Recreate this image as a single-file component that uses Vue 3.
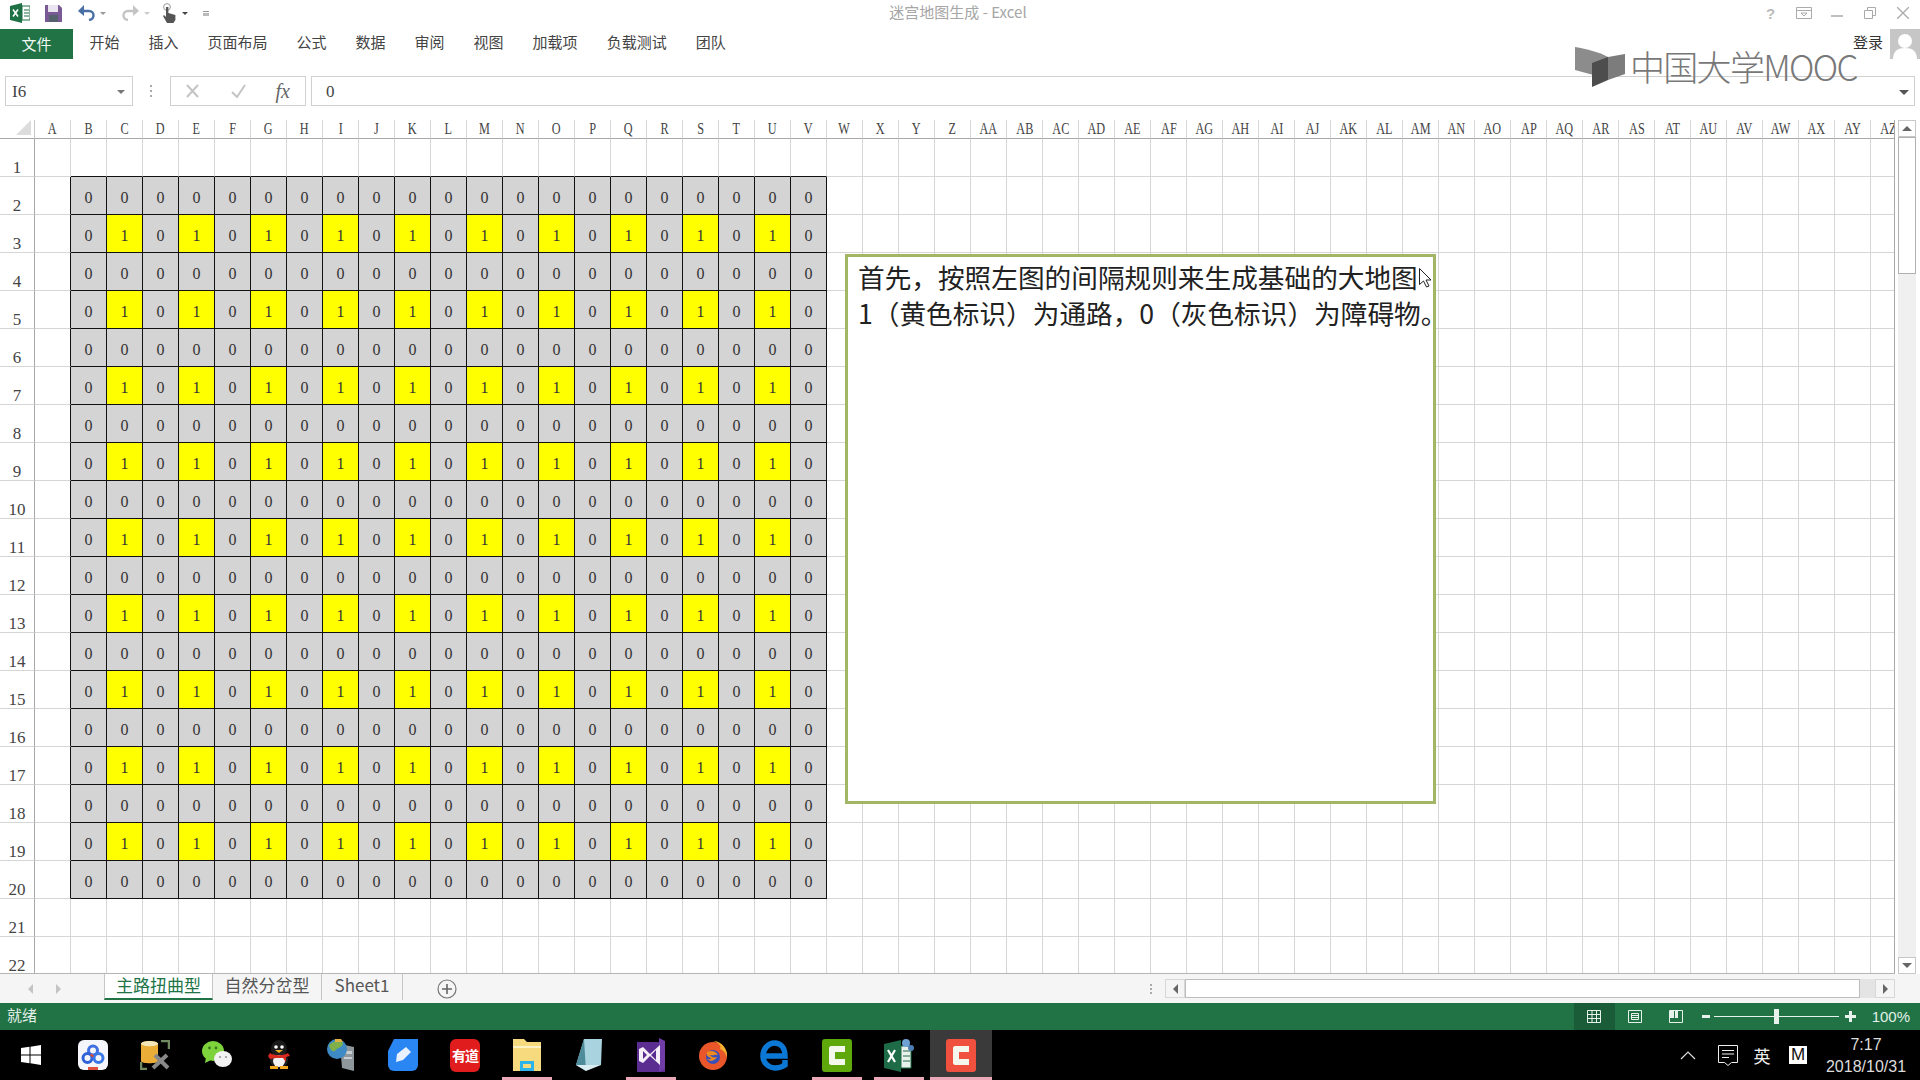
<template>
  <div class="window">
    <header class="titlebar">
      <div class="quick">
        <svg class="qa xl" width="20" height="20" viewBox="0 0 20 20"><path d="M0 3 12 0v20L0 17z" fill="#1e7145"/><path d="M12 3h8v14h-8z" fill="#fff" stroke="#1e7145"/><path d="M14 7h5M14 10h5M14 13h5" stroke="#1e7145"/><path d="m3 6.500 5 7M8 6.500l-5 7" stroke="#fff" stroke-width="1.600"/></svg>
        <svg class="qa save" width="17" height="17" viewBox="0 0 17 17"><path d="M0 0h14l3 3v14H0z" fill="#7a5a94"/><path d="M3 0h10v7H3z" fill="#e9e4ef"/><path d="M4 10h9v7H4z" fill="#55616c"/></svg>
        <svg class="qa undo" width="17" height="16" viewBox="0 0 17 16"><path d="M3 6h8c6 0 6 8 0 9" fill="none" stroke="#4a6fa5" stroke-width="2.400"/><path d="M6 0 0 6l6 5z" fill="#4a6fa5"/></svg>
        <span class="caret small"></span>
        <svg class="qa redo" width="17" height="16" viewBox="0 0 17 16"><path d="M14 6H6c-6 0-6 8 0 9" fill="none" stroke="#c4c4c4" stroke-width="2.400"/><path d="m11 0 6 6-6 5z" fill="#c4c4c4"/></svg>
        <span class="caret small pale"></span>
        <svg class="qa touch" width="14" height="20" viewBox="0 0 14 20"><circle cx="5" cy="4" r="3.400" fill="none" stroke="#999"/><path d="M4 4h2.400v6l7 2v5l-2 3H5L1 13l1-1 2 2z" fill="#555"/></svg>
        <span class="caret small dark"></span>
        <span class="customize"></span>
      </div>
      <div class="doc-title">迷宫地图生成 - Excel</div>
      <div class="win-controls">
        <span class="help">?</span>
        <svg width="16" height="12" viewBox="0 0 16 12"><path d="M.5.5h15v11H.5zM.5 3.500h15M5 6h6l-3 3z" fill="none" stroke="#aaa"/></svg>
        <svg width="12" height="12" viewBox="0 0 12 12"><path d="M0 9h12" stroke="#aaa" stroke-width="1.500"/></svg>
        <svg width="12" height="12" viewBox="0 0 12 12"><path d="M.5 3.500h8v8h-8zM3.500 3V.5h8v8H9" fill="none" stroke="#aaa"/></svg>
        <svg width="12" height="12" viewBox="0 0 12 12"><path d="m0 0 12 12M12 0 0 12" stroke="#aaa" stroke-width="1.300"/></svg>
      </div>
    </header>

    <nav class="ribbon">
      <span class="file-tab">文件</span>
      <span v-for="tab in ribbonTabs" :key="tab" class="ribbon-tab">{{ tab }}</span>
      <span class="login">登录</span>
      <svg class="avatar" width="30" height="30" viewBox="0 0 30 30"><path d="M0 0h30v30H0z" fill="#c6c6c6"/><circle cx="15" cy="12" r="7" fill="#fff"/><path d="M3 30c0-8 5-11 12-11s12 3 12 11z" fill="#fff"/></svg>
    </nav>

    <div class="formula-row">
      <div class="name-box"><span>I6</span><i class="caret"></i></div>
      <div class="dots"></div>
      <div class="fx-box">
        <svg width="16" height="16" viewBox="0 0 16 16"><path d="m2 2 11 12M13 2 2 14" stroke="#c4c4c4" stroke-width="2"/></svg>
        <svg width="17" height="16" viewBox="0 0 17 16"><path d="m2 9 5 5 8-12" fill="none" stroke="#c4c4c4" stroke-width="2"/></svg>
        <span class="fx">fx</span>
      </div>
      <div class="formula-input"><span>0</span><i class="caret wide"></i></div>
    </div>

    <main class="sheet-row">
      <section class="sheet">
        <div class="grid">
          <div class="corner"><b></b></div>
          <div v-for="col in columns" :key="col" class="col-head"><span>{{ col }}</span></div>
          <template v-for="row in rows" :key="row">
            <div class="row-head">{{ row }}</div>
            <div
              v-for="(col, i) in columns"
              :key="col"
              class="cell"
              :class="cellClass(row, i + 1)"
            >{{ cellText(row, i + 1) }}</div>
          </template>
        </div>
        <div class="note">
          <p>首先&#xFF0C;按照左图的间隔规则来生成基础的大地图</p>
          <p>1&#xFF08;黄色标识&#xFF09;为通路&#xFF0C;0&#xFF08;灰色标识&#xFF09;为障碍物。</p>
          <svg class="pointer" width="12" height="20" viewBox="0 0 12 20"><path d="M.5.5v16l4-3.500 3 6 2.500-1-3-6h5z" fill="#fff" stroke="#222"/></svg>
        </div>
      </section>
      <aside class="vscroll">
        <div class="vbtn"><i class="tri up"></i></div>
        <div class="vthumb"></div>
        <div class="vtrack"></div>
        <div class="vbtn"><i class="tri down"></i></div>
      </aside>
    </main>

    <div class="tabs-row">
      <div class="tab-nav"><i class="tri left"></i><i class="tri right"></i></div>
      <span class="sheet-tab active">主路扭曲型</span>
      <span class="sheet-tab">自然分岔型</span>
      <span class="sheet-tab">Sheet1</span>
      <svg class="add" width="20" height="20" viewBox="0 0 20 20"><circle cx="10" cy="10" r="9" fill="none" stroke="#777" stroke-width="1.200"/><path d="M10 5v10M5 10h10" stroke="#666" stroke-width="1.600"/></svg>
      <div class="hscroll">
        <span class="split"></span>
        <div class="hbtn"><i class="tri left dark"></i></div>
        <div class="hthumb"></div>
        <div class="htrack"></div>
        <div class="hbtn"><i class="tri right dark"></i></div>
      </div>
    </div>

    <footer class="status">
      <span class="ready">就绪</span>
      <div class="views">
        <div class="view on"><svg width="14" height="13" viewBox="0 0 14 13"><path d="M.5.5h13v12H.5zM5 .5v12M9.500.5v12M.5 4.500h13M.5 8.500h13" fill="none" stroke="#e8f2ec"/></svg></div>
        <div class="view"><svg width="14" height="13" viewBox="0 0 14 13"><path d="M.5.5h13v12H.5zM3.500 3.500h7v6h-7zM4 5.500h6M4 7.500h6" fill="none" stroke="#e8f2ec"/></svg></div>
        <div class="view"><svg width="14" height="13" viewBox="0 0 14 13"><path d="M.5.5h13v12H.5z" fill="none" stroke="#e8f2ec"/><path d="M1 1h4v7H1zM6 1h3v7H6z" fill="#e8f2ec"/></svg></div>
      </div>
      <div class="zoom-ctl">
        <span class="minus"></span>
        <div class="slider"><b></b></div>
        <span class="plus"></span>
      </div>
      <span class="percent">100%</span>
    </footer>

    <div class="taskbar">
      <div class="task"><svg width="20" height="20" viewBox="0 0 20 20"><path d="M0 3l8.500-1.200V9.500H0zM9.500 1.700 20 0v9.500H9.500zM0 10.500h8.500v7.700L0 17zM9.500 10.500H20V20L9.500 18.300z" fill="#fff"/></svg></div>
      <div class="task"><svg width="30" height="30" viewBox="0 0 30 30"><rect width="30" height="30" rx="6" fill="#f4f6fb"/><g fill="none" stroke-width="3"><circle cx="15" cy="10.500" r="4.500" stroke="#3f6fe0"/><circle cx="9.500" cy="18" r="4.500" stroke="#2f62d8"/><circle cx="20.500" cy="18" r="4.500" stroke="#3a78e8"/></g><path d="M13 13.500l3 2-1 2-3-2z" fill="#d8503c"/><path d="M10 27h10v3H10z" fill="#e0503c"/></svg></div>
      <div class="task"><svg width="30" height="30" viewBox="0 0 30 30"><path d="M1 4c0-4 17-4 17 0v17c0 3-17 3-17 0z" fill="#e9ad38"/><path d="M1 4c0-4 17-4 17 0-2 3-15 3-17 0z" fill="#f4e6b8"/><path d="M21 1h8v8M1 22v7h6" fill="none" stroke="#6f8a60" stroke-width="2.500"/><path d="m13 28 14-13M15 15l13 13" stroke="#888" stroke-width="4"/></svg></div>
      <div class="task"><svg width="30" height="30" viewBox="0 0 30 30"><ellipse cx="11" cy="11" rx="11" ry="10" fill="#7ed23c"/><path d="m4 17-1 6 6-3z" fill="#7ed23c"/><circle cx="7.500" cy="8" r="1.400" fill="#3a7a1c"/><circle cx="14" cy="8" r="1.400" fill="#3a7a1c"/><ellipse cx="21" cy="19" rx="9" ry="8" fill="#f2f2f2"/><circle cx="18" cy="17" r="1.100" fill="#999"/><circle cx="24" cy="17" r="1.100" fill="#999"/></svg></div>
      <div class="task"><svg width="24" height="30" viewBox="0 0 24 30"><ellipse cx="12" cy="9" rx="8" ry="9" fill="#1a1a1a"/><ellipse cx="12" cy="20" rx="9" ry="8" fill="#222"/><ellipse cx="12" cy="21" rx="6" ry="6" fill="#f2f2f2"/><path d="M3 13c5 3 13 3 18 0l2 3-4 1v5l-3-4H9l-6 1-2-3z" fill="#d9281e"/><circle cx="9" cy="7" r="1.800" fill="#fff"/><circle cx="15" cy="7" r="1.800" fill="#fff"/><path d="M8 10h8l-4 3z" fill="#f0b020"/><path d="M3 26h8v3H3zM13 26h8v3h-8z" fill="#f0a820"/></svg></div>
      <div class="task"><svg width="30" height="32" viewBox="0 0 30 32"><path d="M14 5 28 8v24l-12-3z" fill="#8e979c"/><path d="M18 12h8v3h-8zM18 18h8v2h-8z" fill="#c8ced2"/><circle cx="11" cy="10" r="10" fill="#3d8ac4"/><path d="M3 6c4-4 10-5 14-2 0 5-6 4-8 8-3 1-5-2-6-6z" fill="#7fb04a"/><path d="M9 0h6l2 3H9z" fill="#e0b040"/></svg></div>
      <div class="task"><svg width="30" height="32" viewBox="0 0 30 32"><path d="M6 0h24v26a6 6 0 0 1-6 6H6a6 6 0 0 1-6-6V12z" fill="#2a86f2"/><path d="m18 8 5 5-8 8-7 2 1-8z" fill="#e8f1fd"/></svg></div>
      <div class="task"><div class="youdao">有道</div></div>
      <div class="task running"><svg width="28" height="32" viewBox="0 0 28 32"><path d="M0 0h11l3 3h14v29H0z" fill="#f7d97e"/><path d="M0 7h28v2H0z" fill="#fff2c4"/><path d="M7 22h14v10H7z" fill="#2db4ea"/><path d="M10 25h8v4h-8z" fill="#f7d97e"/></svg></div>
      <div class="task"><svg width="26" height="32" viewBox="0 0 26 32"><path d="M8 0h18l-1 26H0z" fill="#a9d3de"/><path d="M8 0 0 26l10 6z" fill="#4e8c9c"/><path d="M10 32 0 26h25z" fill="#d9ecf1"/></svg></div>
      <div class="task running"><svg width="28" height="34" viewBox="0 0 28 34"><path d="M0 4h28v30H0z" fill="#5c2d91"/><path d="M22 0v34l6-3V3z" fill="#6f3ca8"/><path fill="#f4eff9" fill-rule="evenodd" d="M2 11l4-2 7 7 10-9v20l-10-9-7 7-4-2zM6 13v8l4-4zM19 12l-5 5 5 5z"/></svg></div>
      <div class="task"><svg width="30" height="32" viewBox="0 0 30 32"><circle cx="15" cy="17" r="14" fill="#e8562a"/><path d="M15 2c9 0 15 8 14 17-1-5-4-8-7-9 2-3-2-7-7-8z" fill="#f5b02e"/><circle cx="15" cy="18" r="7" fill="#3a4fb8"/><path d="M9 13c4-2 9-1 11 3-3-1-4 1-8 0 1 2 4 3 7 2-2 4-7 5-10 2 3 1 4 0 4-1-3-1-5-3-4-6z" fill="#f28a1e"/></svg></div>
      <div class="task"><svg width="30" height="32" viewBox="0 0 30 32"><path d="M5 17h20C25 8 20 4 14.500 4 8 4 3 10 3 17c0 7 6 12 12 12 4 0 7-1 10-3v-5" fill="none" stroke="#0c78d6" stroke-width="5.500"/></svg></div>
      <div class="task running"><div class="c-app green"><i></i></div></div>
      <div class="task running"><svg width="30" height="34" viewBox="0 0 30 34"><path d="M0 6 17 2v32L0 30z" fill="#1e6b47"/><path d="M17 8h10v22H17z" fill="#e8f1ec" stroke="#1e6b47"/><path d="M19 13h7M19 18h7M19 23h7" stroke="#1e6b47"/><path d="m4 12 7 12M11 12 4 24" stroke="#fff" stroke-width="2.200"/><circle cx="22" cy="5" r="4" fill="#6fa2d4"/><circle cx="27" cy="10" r="3" fill="#4d7fb5"/></svg></div>
      <div class="task running active"><div class="c-app red"><i></i></div></div>
      <div class="tray">
        <div class="tray-item up"><svg width="16" height="9" viewBox="0 0 16 9"><path d="m1 8 7-7 7 7" fill="none" stroke="#ddd" stroke-width="1.200"/></svg></div>
        <div class="tray-item action"><svg width="20" height="21" viewBox="0 0 20 21"><path d="M.5.5h19v17h-6l-3.500 3-3.500-3h-6zM4 5.500h12M4 9h12M4 12.500h7" fill="none" stroke="#eee"/></svg></div>
        <div class="tray-item ime">英</div>
        <div class="tray-item"><span class="m-box">M</span></div>
        <div class="clock"><span>7:17</span><span>2018/10/31</span></div>
      </div>
    </div>

    <div class="mooc-logo">
      <svg width="50" height="42" viewBox="0 0 50 42"><path d="M0 0C12 2 24 5 33 10v22L0 23z" fill="#8c8c8c"/><path d="M33 10 50 7v20l-17 6z" fill="#7c7c7c"/><path d="M17 16 33 10v23l-16 7z" fill="#4d4d4d"/></svg>
      <span class="mooc-text">中国大学MOOC</span>
    </div>
  </div>
</template>

<script setup>
const ribbonTabs = ['开始', '插入', '页面布局', '公式', '数据', '审阅', '视图', '加载项', '负载测试', '团队']

const letters = 'ABCDEFGHIJKLMNOPQRSTUVWXYZ'.split('')
const columns = [...letters, ...letters.map((l) => 'A' + l)]
const rows = Array.from({ length: 22 }, (_, i) => i + 1)

// maze block sits in B2:V20 (col 1 is A)
function inMaze(row, col) {
  return row >= 2 && row <= 20 && col >= 2 && col <= 22
}

function isPath(row, col) {
  return row % 2 === 1 && col % 2 === 1
}

function cellClass(row, col) {
  if (inMaze(row, col)) return ['maze', isPath(row, col) ? 'yellow' : 'gray']
  return {
    'edge-bottom': row === 1 && col >= 2 && col <= 22,
    'edge-right': col === 1 && row >= 2 && row <= 20,
  }
}

function cellText(row, col) {
  if (!inMaze(row, col)) return ''
  return isPath(row, col) ? '1' : '0'
}
</script>

<style>
html, body {
  margin: 0;
  background: #fff;
}
</style>

<style scoped>
.window {
  position: relative;
  width: 1920px;
  height: 1080px;
  overflow: hidden;
  display: flex;
  flex-direction: column;
  background: #fff;
  font-family: "Noto Sans CJK SC", "Liberation Sans", sans-serif;
  color: #444;
}

.titlebar {
  height: 26px;
  display: grid;
  grid-template-columns: 1fr auto 1fr;
  align-items: center;
  flex: none;
}
.quick {
  display: flex;
  align-items: center;
  padding-left: 10px;
}
.qa.save { margin-left: 15px; }
.qa.undo { margin-left: 16px; }
.qa.redo { margin-left: 16px; }
.qa.touch { margin-left: 12px; }
.caret {
  display: inline-block;
  width: 0;
  height: 0;
  border-left: 4px solid transparent;
  border-right: 4px solid transparent;
  border-top: 4px solid #777;
}
.caret.small {
  margin-left: 5px;
  border-left-width: 3px;
  border-right-width: 3px;
  border-top-width: 3px;
  border-top-color: #999;
}
.caret.pale { border-top-color: #ccc; }
.caret.dark { border-top-color: #444; margin-left: 6px; }
.customize {
  width: 6px;
  height: 5px;
  margin-left: 15px;
  border-top: 1px solid #999;
  border-bottom: 3px solid #bbb;
  box-sizing: border-box;
}
.doc-title {
  font-size: 15px;
  line-height: 20px;
  margin-bottom: 3px;
  color: #a6a6a6;
  margin-right: 4px;
}
.win-controls {
  display: grid;
  grid-template-columns: repeat(5, 33px);
  justify-content: end;
  justify-items: center;
  align-items: center;
  padding-right: 1px;
}
.help {
  font-family: "Liberation Sans", sans-serif;
  font-size: 15px;
  font-weight: 700;
  color: #bbb;
}

.ribbon {
  height: 33px;
  flex: none;
  display: flex;
  align-items: flex-end;
  font-size: 15px;
  color: #444;
}
.file-tab {
  width: 73px;
  height: 30px;
  line-height: 30px;
  margin-right: 2px;
  text-align: center;
  background: #217346;
  color: #f2f8f4;
}
.ribbon-tab {
  height: 30px;
  line-height: 26px;
  padding: 0 14.500px;
}
.login {
  margin-left: auto;
  height: 30px;
  line-height: 26px;
  color: #333;
}
.avatar {
  margin-left: 7px;
}

.formula-row {
  height: 30px;
  margin-top: 17px;
  margin-bottom: 14px;
  padding: 0 5px;
  display: flex;
  flex: none;
  align-items: stretch;
  font-family: "Liberation Serif", serif;
  font-size: 17px;
  color: #444;
}
.name-box {
  width: 128px;
  box-sizing: border-box;
  border: 1px solid #d0d0d0;
  display: flex;
  align-items: center;
  justify-content: space-between;
  padding: 2px 7px 0 6px;
}
.dots {
  width: 2px;
  height: 12px;
  margin: 9px 18px 0 17px;
  background: repeating-linear-gradient(#aaa 0 2px, transparent 2px 5px);
}
.fx-box {
  width: 136px;
  box-sizing: border-box;
  border: 1px solid #d0d0d0;
  display: flex;
  align-items: center;
  justify-content: space-between;
  padding: 0 15px 0 14px;
}
.fx {
  font-style: italic;
  font-size: 20px;
  color: #666;
}
.formula-input {
  flex: 1;
  margin-left: 5px;
  box-sizing: border-box;
  border: 1px solid #d0d0d0;
  display: flex;
  align-items: center;
  justify-content: space-between;
  padding: 2px 5px 0 14px;
}
.caret.wide {
  border-left-width: 5px;
  border-right-width: 5px;
  border-top-width: 5px;
  border-top-color: #555;
}

.sheet-row {
  height: 854px;
  display: flex;
  flex: none;
}
.sheet {
  position: relative;
  width: 1895px;
  overflow: hidden;
  box-sizing: border-box;
  border-right: 1px solid #a8a8a8;
  border-bottom: 1px solid #b5b5b5;
}
.grid {
  display: grid;
  grid-template-columns: 35px repeat(52, 36px);
  grid-template-rows: 19px repeat(22, 38px);
  font-family: "Liberation Serif", serif;
}
.grid > div {
  box-sizing: border-box;
}
.corner {
  position: relative;
  border-right: 1px solid #c6c6c6;
  border-bottom: 1px solid #a8a8a8;
}
.corner b {
  position: absolute;
  right: 3px;
  bottom: 3px;
  width: 0;
  height: 0;
  border-left: 15px solid transparent;
  border-bottom: 15px solid #dcdcdc;
}
.col-head {
  border-right: 1px solid #d6d6d6;
  border-bottom: 1px solid #a8a8a8;
  display: flex;
  align-items: center;
  justify-content: center;
  overflow: hidden;
  font-size: 17px;
  color: #444;
}
.col-head span {
  display: inline-block;
  transform: scaleX(0.72);
  white-space: nowrap;
}
.row-head {
  border-right: 1px solid #a8a8a8;
  border-bottom: 1px solid #d6d6d6;
  display: flex;
  align-items: flex-end;
  justify-content: center;
  padding-bottom: 1px;
  line-height: 14px;
  font-size: 17px;
  color: #444;
}
.cell {
  border-right: 1px solid #d6d6d6;
  border-bottom: 1px solid #d6d6d6;
}
.edge-bottom { border-bottom-color: #111; }
.edge-right { border-right-color: #111; }
.maze {
  border-right-color: #111;
  border-bottom-color: #111;
  display: flex;
  align-items: center;
  justify-content: center;
  padding-top: 5px;
  font-size: 16px;
  color: #333;
}
.gray { background: #d4d4d4; }
.yellow { background: #ffff00; }

.note {
  position: absolute;
  left: 845px;
  top: 134px;
  width: 591px;
  height: 550px;
  box-sizing: border-box;
  padding: 2px 0 0 10px;
  border: 3px solid #a2b665;
  background: #fff;
  font-size: 26.670px;
  line-height: 36px;
  color: #222;
}
.note p {
  margin: 0;
  white-space: nowrap;
}
.pointer {
  position: absolute;
  left: 571px;
  top: 11px;
}

.vscroll {
  flex: 1;
  display: flex;
  flex-direction: column;
  padding: 0 4px 0 3px;
}
.vbtn {
  height: 17px;
  flex: none;
  display: flex;
  align-items: center;
  justify-content: center;
  border: 1px solid #c8c8c8;
  box-sizing: border-box;
}
.vthumb {
  height: 137px;
  flex: none;
  border: 1px solid #b0b0b0;
  box-sizing: border-box;
  background: #fff;
}
.vtrack {
  flex: 1;
  background: #f0f0f0;
}
.tri {
  display: inline-block;
  width: 0;
  height: 0;
}
.tri.up {
  border-left: 5px solid transparent;
  border-right: 5px solid transparent;
  border-bottom: 5px solid #666;
}
.tri.down {
  border-left: 5px solid transparent;
  border-right: 5px solid transparent;
  border-top: 5px solid #666;
}
.tri.left {
  border-top: 5px solid transparent;
  border-bottom: 5px solid transparent;
  border-right: 5px solid #c4c4c4;
}
.tri.right {
  border-top: 5px solid transparent;
  border-bottom: 5px solid transparent;
  border-left: 5px solid #c4c4c4;
}
.tri.dark { border-left-color: #666; border-right-color: #666; }
.tri.left.dark { border-left-color: transparent; }
.tri.right.dark { border-right-color: transparent; }

.tabs-row {
  height: 29px;
  flex: none;
  display: flex;
  background: #f5f5f5;
  font-size: 17px;
}
.tab-nav {
  width: 104px;
  flex: none;
  display: flex;
  align-items: center;
  gap: 23px;
  padding-left: 28px;
  box-sizing: border-box;
}
.sheet-tab {
  height: 26px;
  line-height: 22px;
  text-align: center;
  flex: none;
  width: 109px;
  box-sizing: border-box;
  border-right: 1px solid #c6c6c6;
  color: #555;
}
.sheet-tab:last-of-type {
  width: 81px;
}
.sheet-tab.active {
  height: 27px;
  margin-top: -1px;
  line-height: 24px;
  background: #fff;
  color: #217346;
  border-left: 1px solid #c6c6c6;
  border-right: 1px solid #c6c6c6;
  border-bottom: 2px solid #217346;
}
.add {
  margin: 5px 0 0 34px;
}
.hscroll {
  margin: 5px 25px 5px auto;
  width: 745px;
  display: flex;
  align-items: stretch;
}
.split {
  width: 2px;
  margin: 5px 13px 0 0;
  height: 10px;
  background: repeating-linear-gradient(#aaa 0 2px, transparent 2px 4px);
}
.hbtn {
  width: 20px;
  display: flex;
  align-items: center;
  justify-content: center;
  box-sizing: border-box;
  border: 1px solid #d8d8d8;
}
.hthumb {
  flex: 1;
  background: #fff;
  border: 1px solid #bdbdbd;
}
.htrack {
  width: 15px;
  background: #e4e4e4;
}

.status {
  height: 27px;
  flex: none;
  display: flex;
  align-items: center;
  background: #217346;
  color: #e3efe8;
  font-size: 15px;
}
.ready {
  padding-left: 7px;
  padding-bottom: 4px;
}
.views {
  margin-left: auto;
  display: flex;
  align-self: stretch;
}
.view {
  width: 41px;
  display: flex;
  align-items: center;
  justify-content: center;
}
.view.on {
  background: #1a5c38;
}
.zoom-ctl {
  display: flex;
  align-items: center;
  margin-left: 5px;
}
.minus {
  width: 8px;
  height: 3px;
  background: #e8f2ec;
}
.slider {
  position: relative;
  width: 125px;
  height: 1px;
  margin: 0 6px 0 4px;
  background: #e8f2ec;
}
.slider b {
  position: absolute;
  left: 60px;
  top: -7px;
  width: 5px;
  height: 15px;
  background: #e8f2ec;
}
.plus {
  width: 11px;
  height: 11px;
  background:
    linear-gradient(#e8f2ec, #e8f2ec) center / 11px 3px no-repeat,
    linear-gradient(#e8f2ec, #e8f2ec) center / 3px 11px no-repeat;
}
.percent {
  margin-left: 16px;
  margin-right: 10px;
  font-family: "Liberation Sans", sans-serif;
  font-size: 15px;
}

.taskbar {
  flex: 1;
  display: flex;
  background: #000;
}
.task {
  position: relative;
  width: 62px;
  flex: none;
  display: flex;
  align-items: center;
  justify-content: center;
}
.task.running::after {
  content: "";
  position: absolute;
  left: 6px;
  right: 6px;
  bottom: 0;
  height: 3px;
  background: #eba8b8;
}
.task.active {
  background: #3a3a3a;
}
.task.active::after {
  left: 0;
  right: 0;
}
.youdao {
  width: 30px;
  height: 33px;
  border-radius: 6px;
  background: #e01c1c;
  color: #fff;
  font-size: 14px;
  font-weight: 700;
  line-height: 33px;
  text-align: center;
  letter-spacing: -1px;
  white-space: nowrap;
}
.c-app {
  position: relative;
  width: 30px;
  height: 33px;
  border-radius: 3px;
}
.c-app.green { background: #5ea80c; }
.c-app.red { background: #f0503e; }
.c-app i {
  position: absolute;
  left: 7px;
  top: 7px;
  width: 16px;
  height: 19px;
  box-sizing: border-box;
  border: 6px solid #f4f8ec;
  border-right: 0;
  border-radius: 3px 0 0 3px;
}
.tray {
  margin-left: auto;
  padding-right: 8px;
  display: flex;
  align-items: center;
  color: #eee;
}
.tray-item {
  width: 40px;
  display: flex;
  align-items: center;
  justify-content: center;
}
.tray-item.ime {
  width: 28px;
  font-size: 17px;
}
.tray-item:nth-child(4) {
  width: 44px;
}
.m-box {
  width: 18px;
  height: 18px;
  background: #fff;
  color: #111;
  font-family: "Liberation Sans", sans-serif;
  font-size: 17px;
  line-height: 18px;
  text-align: center;
}
.clock {
  width: 92px;
  display: flex;
  flex-direction: column;
  align-items: center;
  gap: 3px;
  font-family: "Liberation Sans", sans-serif;
  font-size: 16px;
  line-height: 19px;
  color: #ddd;
}

.mooc-logo {
  position: absolute;
  left: 1575px;
  top: 47px;
  display: flex;
  align-items: flex-start;
  gap: 5px;
}
.mooc-text {
  font-size: 35px;
  font-weight: 300;
  line-height: 38px;
  color: #787878;
  letter-spacing: -1.700px;
  white-space: nowrap;
}
</style>
